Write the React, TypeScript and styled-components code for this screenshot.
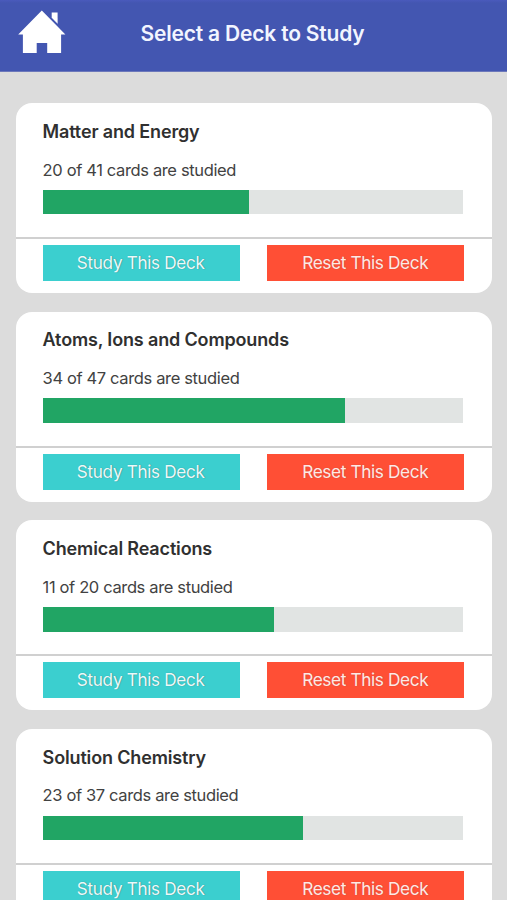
import React from "react";
import styled, { createGlobalStyle } from "styled-components";

const GlobalStyle = createGlobalStyle`
  * { box-sizing: border-box; }
  body {
    margin: 0;
    height: 900px;
    overflow: hidden;
    background: #dcdcdc;
    font-family: Inter, "Liberation Sans", sans-serif;
  }
`;

const Screen = styled.div`
  height: 900px;
  overflow: hidden;
  background: #dcdcdc;
`;

const Header = styled.header`
  display: grid;
  grid-template-columns: 84px 1fr 84px;
  height: 72px;
  padding-bottom: 6px;
  align-items: center;
  background: linear-gradient(#4a5abc 0, #4356b1 3px);
  border-bottom: 1px solid #6c78bb;
`;

const HomeButton = styled.button`
  display: flex;
  width: 48px;
  height: 46px;
  margin: 0 0 0 18px;
  padding: 0;
  border: 0;
  background: none;
`;

const PageTitle = styled.h1`
  margin: 0;
  padding: 2px 2px 0 0;
  text-align: center;
  color: #f2f5ff;
  font-size: 21px;
  font-weight: 600;
  line-height: 26px;
  white-space: nowrap;
  letter-spacing: -0.2px;
`;

const DeckList = styled.main`
  display: flex;
  flex-direction: column;
  gap: 18.6px;
  padding: 31.3px 15.4px 0 16px;
`;

const Card = styled.article`
  flex: none;
  height: 190px;
  border-radius: 16px;
  background: #fff;
`;

const Summary = styled.div`
  height: 136px;
  padding: 17.6px 28.4px 0 26.6px;
  border-bottom: 2px solid #d0d0d0;
`;

const DeckName = styled.h2`
  margin: 0;
  color: #303030;
  font-size: 18px;
  font-weight: 600;
  line-height: 22px;
  letter-spacing: -0.15px;
`;

const Progress = styled.p`
  margin: 16.7px 0 9.3px;
  color: #424242;
  font-size: 16.5px;
  line-height: 21px;
  letter-spacing: -0.36px;
`;

const Track = styled.div`
  height: 24.5px;
  background: #e1e4e3;
`;

const Fill = styled.div`
  height: 100%;
  background: #21a564;
`;

const Actions = styled.div`
  display: grid;
  grid-template-columns: 197px 197px;
  gap: 27.6px;
  padding: 6px 0 0 26.7px;
`;

const ActionButton = styled.button<{ $tone: "study" | "reset" }>`
  height: 36px;
  padding: 0 1px 1px 0;
  border: 0;
  background: ${(p) => (p.$tone === "study" ? "#3bcfcf" : "#ff4f35")};
  color: ${(p) => (p.$tone === "study" ? "#eafafa" : "#ffe9e4")};
  font: 400 17.3px Inter, "Liberation Sans", sans-serif;
  letter-spacing: -0.4px;
  text-shadow: 0.5px -0.5px 1px ${(p) => (p.$tone === "study" ? "#30858a" : "#b94a3c")};
`;

const decks = [
  { name: "Matter and Energy", studied: 20, total: 41 },
  { name: "Atoms, Ions and Compounds", studied: 34, total: 47 },
  { name: "Chemical Reactions", studied: 11, total: 20 },
  { name: "Solution Chemistry", studied: 23, total: 37 },
];

export default function App() {
  return (
    <>
      <GlobalStyle />
      <Screen>
        <Header>
          <HomeButton aria-label="Home">
            <svg width="48" height="46" viewBox="18 9.5 48 46" fill="#fff">
              <path d="M41.8 10 L65.4 34 H61.1 V52.6 H47.2 V42.4 H36.7 V52.6 H22.9 V34 H18.2 Z" />
              <path d="M51.7 12 H57.6 V23.3 L51.7 17.3 Z" />
            </svg>
          </HomeButton>
          <PageTitle>Select a Deck to Study</PageTitle>
        </Header>
        <DeckList>
          {decks.map((deck) => (
            <Card key={deck.name}>
              <Summary>
                <DeckName>{deck.name}</DeckName>
                <Progress>{`${deck.studied} of ${deck.total} cards are studied`}</Progress>
                <Track>
                  <Fill style={{ width: `${Math.round((deck.studied / deck.total) * 100)}%` }} />
                </Track>
              </Summary>
              <Actions>
                <ActionButton $tone="study">Study This Deck</ActionButton>
                <ActionButton $tone="reset">Reset This Deck</ActionButton>
              </Actions>
            </Card>
          ))}
        </DeckList>
      </Screen>
    </>
  );
}
